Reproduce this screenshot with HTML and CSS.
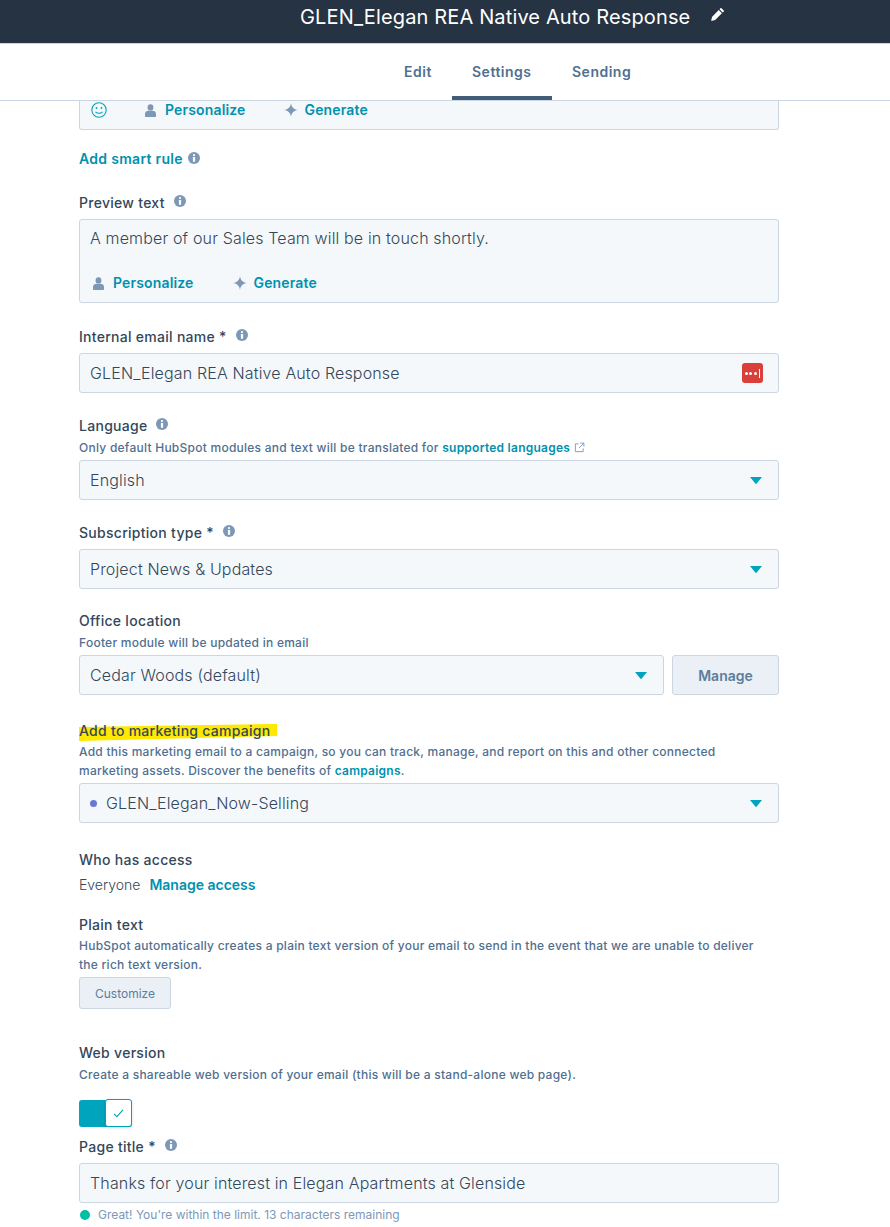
FILE: index.html
```html
<!DOCTYPE html>
<html lang="en">
<head>
  <meta charset="UTF-8" />
  <title>Email settings</title>
  <link rel="stylesheet" href="styles.css">
</head>
<body>
  <svg class="icon-defs" width="0" height="0">
    <symbol id="info" viewBox="0 0 12 12">
      <circle cx="6" cy="6" r="6" fill="currentColor"/>
      <circle cx="6" cy="3.1" r="1.1" fill="#fff"/>
      <rect x="4.9" y="5" width="2.2" height="4.8" rx=".4" fill="#fff"/>
    </symbol>
    <symbol id="person" viewBox="0 0 11 13">
      <ellipse cx="5.5" cy="3.4" rx="2.9" ry="3.2" fill="currentColor"/>
      <path d="M0 12.200V10c0-2.100 1.800-3.200 3.500-3.200h4C9.200 6.800 11 7.900 11 10v2.200c0 .5-.3.8-.7.8H.7c-.4 0-.7-.3-.7-.8z" fill="currentColor"/>
    </symbol>
    <symbol id="spark" viewBox="0 0 14 14">
      <path d="M7 0c.5 4 2.500 6.200 7 7-4.500.8-6.500 3-7 7-.5-4-2.500-6.200-7-7 4.500-.8 6.500-3 7-7z" fill="currentColor"/>
    </symbol>
    <symbol id="caret" viewBox="0 0 12 7">
      <path d="M0 0h12L6.700 6.500a.9.9 0 0 1-1.400 0z" fill="currentColor"/>
    </symbol>
  </svg>

  <header class="topbar">
    <h1 class="email-title">GLEN_Elegan REA Native Auto Response</h1>
    <svg class="pencil" viewBox="0 0 14 14"><path d="M10 .8l3.200 3.200-1.500 1.500-3.200-3.200zM7.700 3.100l3.200 3.200-6.800 6.800-3.900.9.800-4z" fill="#fff"/></svg>
  </header>

  <nav class="tabs">
    <a class="tab tab-edit">Edit</a>
    <a class="tab tab-settings active">Settings</a>
    <a class="tab">Sending</a>
  </nav>

  <main class="form">
    <div class="box box-tail">
      <svg class="smiley" viewBox="0 0 16 16" fill="none" stroke="currentColor"><circle cx="8" cy="8" r="7.200" stroke-width="1.100"/><circle cx="5.500" cy="6" r=".9" fill="currentColor" stroke="none"/><circle cx="10.500" cy="6" r=".9" fill="currentColor" stroke="none"/><path d="M4.500 9.800c1.800 2 5.200 2 7 0" stroke-width="1.100"/></svg>
      <span class="action"><svg class="i-person"><use href="#person"/></svg>Personalize</span>
      <span class="action"><svg class="i-spark"><use href="#spark"/></svg>Generate</span>
    </div>

    <div class="smart-rule"><a class="link">Add smart rule</a><svg class="i-info"><use href="#info"/></svg></div>

    <section class="field mt-25">
      <label class="label">Preview text<svg class="i-info wide"><use href="#info"/></svg></label>
      <div class="box box-area">
        <div class="value">A member of our Sales Team will be in touch shortly.</div>
        <div class="actions">
          <span class="action"><svg class="i-person"><use href="#person"/></svg>Personalize</span>
          <span class="action"><svg class="i-spark"><use href="#spark"/></svg>Generate</span>
        </div>
      </div>
    </section>

    <section class="field mt-24">
      <label class="label">Internal email name *<svg class="i-info wide"><use href="#info"/></svg></label>
      <div class="box input input-lastpass">
        <span class="value">GLEN_Elegan REA Native Auto Response</span>
        <span class="lastpass"><i></i><i></i><i></i><b></b></span>
      </div>
    </section>

    <section class="field mt-23">
      <label class="label tight">Language<svg class="i-info wide"><use href="#info"/></svg></label>
      <p class="help">Only default HubSpot modules and text will be translated for <a class="link">supported languages</a>
        <svg class="ext" viewBox="0 0 12 12" fill="none" stroke="currentColor" stroke-width="1"><path d="M5 2H1.500v8.500H10V7M7 1.200h3.800V5M10.600 1.400L5.500 6.500"/></svg></p>
      <div class="box input"><span class="value">English</span><svg class="caret"><use href="#caret"/></svg></div>
    </section>

    <section class="field mt-23">
      <label class="label">Subscription type *<svg class="i-info wide"><use href="#info"/></svg></label>
      <div class="box input"><span class="value">Project News &amp; Updates</span><svg class="caret"><use href="#caret"/></svg></div>
    </section>

    <section class="field mt-22">
      <label class="label tight">Office location</label>
      <p class="help">Footer module will be updated in email</p>
      <div class="row">
        <div class="box input grow"><span class="value">Cedar Woods (default)</span><svg class="caret"><use href="#caret"/></svg></div>
        <button class="btn btn-manage">Manage</button>
      </div>
    </section>

    <section class="field mt-26">
      <label class="label snug marked"><span>Add to marketing campaign</span></label>
      <p class="help">Add this marketing email to a campaign, so you can track, manage, and report on this and other connected<br>marketing assets. Discover the benefits of <a class="link">campaigns</a>.</p>
      <div class="box input">
        <span class="value"><i class="dot"></i>GLEN_Elegan_Now-Selling</span>
        <svg class="caret"><use href="#caret"/></svg>
      </div>
    </section>

    <section class="field mt-27">
      <label class="label access-label">Who has access</label>
      <p class="access"><span>Everyone</span><a class="link">Manage access</a></p>
    </section>

    <section class="field mt-20">
      <label class="label snug">Plain text</label>
      <p class="help">HubSpot automatically creates a plain text version of your email to send in the event that we are unable to deliver<br>the rich text version.</p>
      <button class="btn btn-small">Customize</button>
    </section>

    <section class="field mt-34">
      <label class="label tight">Web version</label>
      <p class="help">Create a shareable web version of your email (this will be a stand-alone web page).</p>
      <div class="toggle">
        <span class="toggle-knob"><svg viewBox="0 0 12 10" fill="none" stroke="currentColor" stroke-width="1.200"><path d="M1 5.500l3.200 3L11 1"/></svg></span>
      </div>
    </section>

    <section class="field mt-10">
      <label class="label">Page title *<svg class="i-info wide"><use href="#info"/></svg></label>
      <div class="box input"><span class="value">Thanks for your interest in Elegan Apartments at Glenside</span></div>
      <p class="limit"><i class="ok"></i>Great! You're within the limit. 13 characters remaining</p>
    </section>
  </main>
</body>
</html>
```

FILE: styles.css
```css
* {
  margin: 0;
  padding: 0;
  box-sizing: border-box;
}

html, body {
  width: 100%;
  height: 100%;
  overflow: hidden;
  background-color: white;
  color: #33475b;
  font-family: Inter, "Open Sans", sans-serif;
}

.icon-defs {
  position: absolute;
}

.topbar {
  height: 44px;
  background-color: #253342;
  border-bottom: 1px solid #cbd6e2;
  display: flex;
  align-items: flex-start;
  padding: 5px 0 0 300px;
  color: white;
}

.email-title {
  font-size: 20px;
  font-weight: 400;
  line-height: 24px;
  letter-spacing: .14px;
  white-space: nowrap;
}

.pencil {
  width: 14px;
  height: 14px;
  margin: 2px 0 0 21px;
}

.tabs {
  height: 57px;
  display: flex;
  padding-left: 384px;
  border-bottom: 1px solid #cbd6e2;
}

.tab {
  padding: 18px 20px 0;
  font-size: 14px;
  font-weight: 600;
  line-height: 20px;
  letter-spacing: .5px;
  color: #516f90;
}

.tab-edit {
  width: 68px;
}

.tab-settings {
  width: 100px;
}

.tab.active {
  border-bottom: 4px solid #425b76;
  height: 56px;
}

.form {
  width: 700px;
  margin-left: 79px;
}

.box {
  background-color: #f5f8fa;
  border: 1px solid #cbd6e2;
  border-radius: 3px;
}

.box-tail {
  height: 29px;
  border-top: none;
  border-radius: 0 0 3px 3px;
  display: flex;
  align-items: flex-start;
  gap: 38px;
  padding: 0 0 0 11px;
}

.smiley {
  width: 16px;
  height: 16px;
  margin-top: 1px;
  color: #00a4bd;
}

.action {
  display: inline-flex;
  align-items: center;
  font-size: 14px;
  font-weight: 600;
  line-height: 20px;
  letter-spacing: .15px;
  color: #0091ae;
}

.box-tail .action {
  margin-top: -1px;
}

.i-person {
  width: 11px;
  height: 13px;
  margin-right: 9px;
  color: #7c98b6;
}

.i-spark {
  width: 14px;
  height: 14px;
  margin-right: 7px;
  color: #7c98b6;
}

.i-info {
  width: 12px;
  height: 12px;
  margin-left: 5px;
  color: #7c98b6;
}

.i-info.wide {
  margin-left: 9px;
  vertical-align: 1px;
}

.link {
  color: #0091ae;
  font-weight: 600;
}

.smart-rule {
  margin-top: 18px;
  display: flex;
  align-items: center;
  height: 20px;
  font-size: 14px;
  letter-spacing: .3px;
}

.mt-10 { margin-top: 10px; }
.mt-20 { margin-top: 20px; }
.mt-22 { margin-top: 22px; }
.mt-23 { margin-top: 23px; }
.mt-24 { margin-top: 24px; }
.mt-25 { margin-top: 25px; }
.mt-26 { margin-top: 26px; }
.mt-27 { margin-top: 27px; }
.mt-34 { margin-top: 34px; }

.label {
  display: block;
  font-size: 14px;
  font-weight: 500;
  line-height: 20px;
  letter-spacing: .28px;
  margin-bottom: 6px;
}

.label.tight {
  margin-bottom: 2px;
}

.label.snug {
  margin-bottom: 1px;
}

.access-label {
  margin-bottom: 5px;
}

.marked {
  position: relative;
}

.marked span {
  position: relative;
}

.marked::before {
  content: '';
  position: absolute;
  left: 0;
  top: 3px;
  width: 198px;
  height: 17px;
  background-color: #ffe900;
  clip-path: polygon(0 18%, 100% 0, 100% 70%, 0 100%);
}

.help {
  font-size: 12px;
  font-weight: 500;
  line-height: 19px;
  letter-spacing: .25px;
  color: #516f90;
  margin-bottom: 3px;
}

.help .ext {
  width: 11px;
  height: 11px;
  color: #7c98b6;
  vertical-align: -1px;
}

.value {
  font-size: 16px;
  line-height: 22px;
  font-weight: 300;
  letter-spacing: .15px;
  color: #33475b;
}

.box-area {
  height: 84px;
  padding: 7px 10px 0;
}

.actions {
  display: flex;
  gap: 39px;
  margin-top: 24px;
  padding-left: 3px;
}

.input {
  height: 40px;
  padding: 0 10px;
  display: flex;
  align-items: center;
  justify-content: space-between;
}

.input-lastpass {
  padding-right: 15px;
}

.caret {
  width: 12px;
  height: 7px;
  margin-right: 6px;
  color: #00a4bd;
}

.lastpass {
  width: 21px;
  height: 20px;
  background-color: #d9403b;
  border-radius: 3px;
  display: flex;
  align-items: center;
  justify-content: center;
  gap: 1.500px;
}

.lastpass i {
  width: 3px;
  height: 3px;
  background-color: white;
  border-radius: 50%;
}

.lastpass b {
  width: 1px;
  height: 9px;
  background-color: white;
  margin-left: 1px;
}

.row {
  display: flex;
  gap: 8px;
}

.grow {
  flex: 1;
}

.btn {
  background-color: #eaf0f6;
  border: 1px solid #cbd6e2;
  border-radius: 3px;
  color: #5f7c9b;
  font-family: inherit;
}

.btn-manage {
  width: 107px;
  height: 40px;
  font-size: 14px;
  font-weight: 600;
}

.btn-small {
  display: block;
  width: 92px;
  height: 32px;
  font-size: 12px;
  font-weight: 400;
}

.dot {
  display: inline-block;
  width: 7px;
  height: 7px;
  margin-right: 9px;
  border-radius: 50%;
  background-color: #6a78d1;
  vertical-align: 2px;
}

.access {
  display: flex;
  gap: 9px;
  font-size: 14px;
  font-weight: 300;
  line-height: 20px;
}

.toggle {
  width: 53px;
  height: 27px;
  margin-top: 16px;
  background-color: #00a4bd;
  border-radius: 3px;
  position: relative;
}

.toggle-knob {
  position: absolute;
  right: 0;
  top: -1px;
  width: 27px;
  height: 28px;
  background-color: white;
  border: 1px solid #00a4bd;
  border-radius: 3px;
  box-shadow: 0 1px 3px rgba(0, 0, 0, 0.15);
  color: #00a4bd;
  display: flex;
  align-items: center;
  justify-content: center;
}

.toggle-knob svg {
  width: 11px;
  height: 9px;
}

.limit {
  display: flex;
  align-items: center;
  font-size: 12px;
  line-height: 20px;
  margin-top: 2px;
  color: #7c98b6;
}

.ok {
  width: 10px;
  height: 10px;
  margin: 0 8px 0 1px;
  border-radius: 50%;
  background-color: #00bda5;
}
```
